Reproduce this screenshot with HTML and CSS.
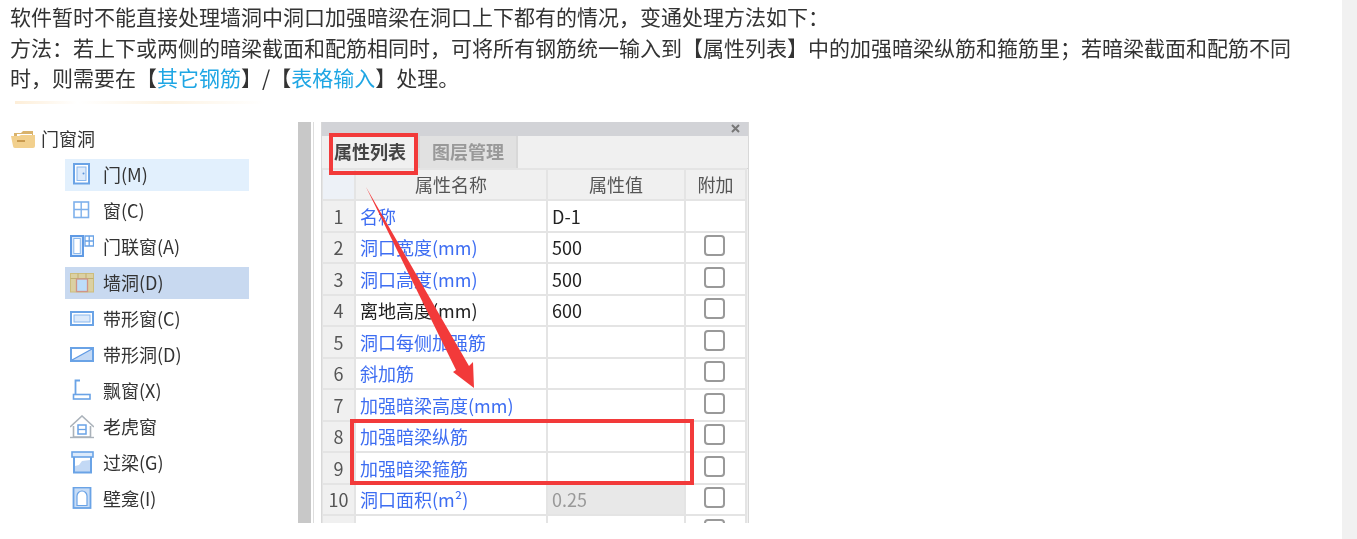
FILE: index.html
```html
<!DOCTYPE html>
<html lang="zh-CN">
	<head>
		<meta charset="UTF-8" />
		<meta name="viewport" content="width=device-width, initial-scale=1.0" />
		<title>墙洞处理方法</title>
		<link rel="stylesheet" href="styles.css">
	</head>
	<body>
		<div class="content">
			<div class="text">
				<p>软件暂时不能直接处理墙洞中洞口加强暗梁在洞口上下都有的情况，变通处理方法如下：</p>
				<p>方法：若上下或两侧的暗梁截面和配筋相同时，可将所有钢筋统一输入到【属性列表】中的加强暗梁纵筋和箍筋里；若暗梁截面和配筋不同时，则需要在【<a class="link">其它钢筋</a>】/【<a class="link">表格输入</a>】处理。</p>
			</div>
			<div class="smudge"></div>

			<div class="figure">
				<div class="tree">
					<div class="tree-head">
						<svg class="folder" width="24" height="18" viewBox="0 0 24 18">
							<path d="M3 3h7l2-2h10v7H3z" fill="#d9b36c" />
							<path d="M6 4h15v5H6z" fill="#fff" />
							<path d="M0 6h8l2-1h14v11a2 2 0 0 1-2 2H4a2 2 0 0 1-2-2z" fill="#f2d08d" />
							<path d="M6 10h8v2H6z" fill="#c99a4e" />
						</svg>
						<span>门窗洞</span>
					</div>
					<div class="item hover">
						<svg width="24" height="24" viewBox="0 0 24 24">
							<rect x="4" y="1" width="15" height="19.5" fill="#fff" stroke="#6aa3e6" stroke-width="2" />
							<rect x="7" y="4" width="9" height="13.5" fill="#dceafb" stroke="#8ab8ee" />
							<circle cx="13.5" cy="10.5" r="1" fill="#5b93da" />
						</svg>
						<span>门(M)</span>
					</div>
					<div class="item">
						<svg width="24" height="24" viewBox="0 0 24 24">
							<rect x="4" y="3" width="14.5" height="15.5" fill="#fff" stroke="#7fb1ec" stroke-width="1.6" />
							<path d="M11.2 3v15.5M4 10.5h14.5" stroke="#7fb1ec" stroke-width="1.4" />
						</svg>
						<span>窗(C)</span>
					</div>
					<div class="item">
						<svg width="24" height="24" viewBox="0 0 24 24">
							<rect x="1" y="1" width="12" height="20" fill="#dceafb" stroke="#5f9ae4" stroke-width="2" />
							<rect x="3.8" y="3.5" width="6.5" height="15" fill="#fff" stroke="#8ab8ee" />
							<path d="M15 1h8.5v10H15zM19.2 1v10M15 6h8.5" fill="#fff" stroke="#6aa3e6" stroke-width="1.3" />
						</svg>
						<span>门联窗(A)</span>
					</div>
					<div class="item active">
						<svg width="24" height="24" viewBox="0 0 24 24">
							<rect x="0.5" y="2.5" width="23" height="18.5" fill="#dbd0a2" stroke="#cdbd7d" />
							<path d="M0.5 7.500h23M8 2.500v5M16 2.500v5" stroke="#bfae70" />
							<rect x="6.500" y="8" width="11" height="12.500" fill="#bcdcfa" stroke="#cf9488" stroke-width="1.300" />
						</svg>
						<span>墙洞(D)</span>
					</div>
					<div class="item">
						<svg width="24" height="24" viewBox="0 0 24 24">
							<rect x="1" y="5" width="22" height="13" fill="#fff" stroke="#6aa3e6" stroke-width="2" />
							<rect x="4" y="8" width="16" height="7" fill="#dceafb" stroke="#8ab8ee" />
						</svg>
						<span>带形窗(C)</span>
					</div>
					<div class="item">
						<svg width="24" height="24" viewBox="0 0 24 24">
							<rect x="1" y="5" width="22" height="13" fill="#fff" stroke="#6aa3e6" stroke-width="2" />
							<path d="M2 17L22 6v11z" fill="#c3d9f5" />
							<path d="M2 17L22 6" stroke="#5f9ae4" stroke-width="1.300" />
						</svg>
						<span>带形洞(D)</span>
					</div>
					<div class="item">
						<svg width="24" height="24" viewBox="0 0 24 24">
							<path d="M10 1.500H5.500V15" fill="none" stroke="#6aa3e6" stroke-width="1.800" />
							<rect x="3.500" y="15.500" width="16.500" height="4.500" fill="#fff" stroke="#6aa3e6" stroke-width="1.600" />
						</svg>
						<span>飘窗(X)</span>
					</div>
					<div class="item">
						<svg width="24" height="24" viewBox="0 0 24 24">
							<path d="M0 12L12 1l12 11" fill="none" stroke="#aab2ba" stroke-width="1.600" />
							<path d="M3.500 11v11h17V11" fill="none" stroke="#aab2ba" stroke-width="1.600" />
							<path d="M0 22.500h24" stroke="#aab2ba" stroke-width="1.400" />
							<rect x="8" y="10" width="8" height="9" fill="#fff" stroke="#6aa3e6" stroke-width="1.500" />
							<path d="M8 14.500h8" stroke="#6aa3e6" stroke-width="1.300" />
						</svg>
						<span>老虎窗</span>
					</div>
					<div class="item">
						<svg width="24" height="24" viewBox="0 0 24 24">
							<path d="M5 15l4-1 3-4 8-1v12H5z" fill="#c3d9f5" />
							<path d="M4 6v15.500h17V6" fill="none" stroke="#6aa3e6" stroke-width="2" />
							<rect x="2" y="1" width="21" height="5" fill="#dceafb" stroke="#6aa3e6" stroke-width="1.600" />
						</svg>
						<span>过梁(G)</span>
					</div>
					<div class="item">
						<svg width="24" height="24" viewBox="0 0 24 24">
							<rect x="3.500" y="0.500" width="17" height="20.500" fill="#c7dcf6" stroke="#6aa3e6" stroke-width="1.800" />
							<path d="M7 18.500V9a5 5 0 0 1 10 0v9.500z" fill="#fff" stroke="#6aa3e6" stroke-width="1.200" />
						</svg>
						<span>壁龛(I)</span>
					</div>
				</div>

				<div class="side-bar"></div>
				<div class="side-line"></div>

				<div class="panel">
					<div class="panel-title">
						<svg width="9" height="9" viewBox="0 0 9 9">
							<path d="M1 1l7 7M8 1L1 8" stroke="#777" stroke-width="2" />
						</svg>
					</div>
					<div class="tabs">
						<div class="tab current">属性列表</div>
						<div class="tab">图层管理</div>
					</div>
					<table class="props">
						<colgroup>
							<col class="col-num" />
							<col class="col-name" />
							<col class="col-value" />
							<col class="col-add" />
						</colgroup>
						<thead>
							<tr>
								<th class="corner"></th>
								<th>属性名称</th>
								<th>属性值</th>
								<th>附加</th>
							</tr>
						</thead>
						<tbody>
							<tr><td class="num">1</td><td class="name">名称</td><td class="value">D-1</td><td></td></tr>
							<tr><td class="num">2</td><td class="name">洞口宽度(mm)</td><td class="value">500</td><td><span class="check"></span></td></tr>
							<tr><td class="num">3</td><td class="name">洞口高度(mm)</td><td class="value">500</td><td><span class="check"></span></td></tr>
							<tr><td class="num">4</td><td class="name plain">离地高度(mm)</td><td class="value">600</td><td><span class="check"></span></td></tr>
							<tr><td class="num">5</td><td class="name">洞口每侧加强筋</td><td class="value"></td><td><span class="check"></span></td></tr>
							<tr><td class="num">6</td><td class="name">斜加筋</td><td class="value"></td><td><span class="check"></span></td></tr>
							<tr><td class="num">7</td><td class="name">加强暗梁高度(mm)</td><td class="value"></td><td><span class="check"></span></td></tr>
							<tr><td class="num">8</td><td class="name">加强暗梁纵筋</td><td class="value"></td><td><span class="check"></span></td></tr>
							<tr><td class="num">9</td><td class="name">加强暗梁箍筋</td><td class="value"></td><td><span class="check"></span></td></tr>
							<tr><td class="num">10</td><td class="name">洞口面积(m²)</td><td class="value locked">0.25</td><td><span class="check"></span></td></tr>
							<tr><td class="num"></td><td class="name"></td><td class="value"></td><td><span class="check"></span></td></tr>
						</tbody>
					</table>

					<!-- red marks drawn over the screenshot -->
					<div class="mark mark-tab"></div>
					<div class="mark mark-rows"></div>
					<svg class="arrow" width="428" height="401" viewBox="0 0 428 401">
						<path d="M44 65L147 244 151 240 152 266 131 250 134 248z" fill="#f23a3a" />
					</svg>
				</div>
			</div>
		</div>
		<div class="scroll-strip"></div>
	</body>
</html>
```

FILE: styles.css
```css
body {
	display: flex;
	height: 100vh;
	margin: 0;
	overflow: hidden;
	background-color: #fff;
	color: #333;
	font-family: "Noto Sans CJK SC", "Liberation Sans", sans-serif;
}
.content {
	flex: 1;
	min-width: 0;
	filter: blur(0.5px);
}
.scroll-strip {
	width: 15px;
	background-color: #f1f1f1;
}
.text {
	padding: 1px 40px 0 10px;
	font-size: 21px;
	line-height: 30.5px;
}
.text p {
	margin: 0;
}
.link {
	color: #1fa6e4;
}
.smudge {
	width: 250px;
	height: 3px;
	margin: 8px 0 18px 15px;
	background: linear-gradient(90deg, #fdeed8, #fff 25%, #fdf3e3 60%, #fff);
}

.figure {
	display: flex;
	height: 401px;
}
.tree {
	width: 238px;
	margin-left: 11px;
	padding-top: 5px;
	font-size: 18px;
}
.tree span {
	padding-bottom: 2px;
}
.tree-head {
	display: flex;
	align-items: center;
	gap: 6px;
	height: 24px;
	margin-bottom: 8px;
}
.item {
	display: flex;
	align-items: center;
	gap: 9px;
	height: 32px;
	margin: 0 0 4px 54px;
	padding-left: 5px;
}
.item.hover {
	background-color: #e2f0fd;
}
.item.active {
	background-color: #c8d9f0;
}

.side-bar {
	width: 13px;
	margin-left: 49px;
	background-color: #c8c8c8;
}
.side-line {
	width: 1px;
	margin-left: 2px;
	background-color: #ddd;
}
.panel {
	position: relative;
	width: 428px;
	margin-left: 7px;
	overflow: hidden;
	box-sizing: border-box;
	border-left: 1px solid #d8d8d8;
	border-right: 1px solid #d8d8d8;
	background-color: #f0f0f0;
}
.panel-title {
	display: flex;
	justify-content: flex-end;
	align-items: center;
	height: 14px;
	padding-right: 8px;
	background-color: #d2d3d7;
}
.tabs {
	display: flex;
	height: 32px;
	border-bottom: 1px solid #d4d4d4;
	font-size: 18px;
	font-weight: bold;
}
.tab {
	width: 96px;
	border-right: 2px solid #d8d8d8;
	background-color: #e1e1e1;
	color: #999;
	line-height: 30px;
	text-align: center;
}
.tab.current {
	background-color: #f0f0f0;
	color: #444;
}

.props {
	width: 424px;
	margin: -1px 0 0 -1px;
	table-layout: fixed;
	border-collapse: collapse;
	font-size: 18px;
}
.col-num {
	width: 33px;
}
.col-name {
	width: 192px;
}
.col-value {
	width: 138px;
}
.col-add {
	width: 61px;
}
.props th,
.props td {
	height: 29.5px;
	padding: 0;
	border: 2px solid #e4e4e4;
	line-height: 24px;
	white-space: nowrap;
}
.props th {
	background-color: #f0f0f0;
	color: #555;
	font-weight: normal;
}
.props th.corner {
	background-color: #edf1f7;
}
.props td {
	background-color: #fff;
}
.props td.num {
	background-color: #f0f0f0;
	color: #555;
	text-align: center;
}
.name {
	padding-left: 4px !important;
	color: #3d6df2;
}
.name.plain {
	color: #222;
}
.value {
	padding-left: 4px !important;
	color: #222;
}
.props td.locked {
	background-color: #e8e8e8;
	color: #999;
}
.check {
	display: block;
	box-sizing: border-box;
	width: 21px;
	height: 21px;
	margin: 0 0 3px 18px;
	border: 2px solid #999;
	border-radius: 4px;
	background-color: #fff;
}

.mark {
	position: absolute;
	box-sizing: border-box;
	border: 4px solid #f23a3a;
}
.mark-tab {
	left: 7px;
	top: 11px;
	width: 89px;
	height: 42px;
}
.mark-rows {
	left: 28px;
	top: 297px;
	width: 344px;
	height: 66px;
}
.arrow {
	position: absolute;
	left: 0;
	top: 0;
}
```
